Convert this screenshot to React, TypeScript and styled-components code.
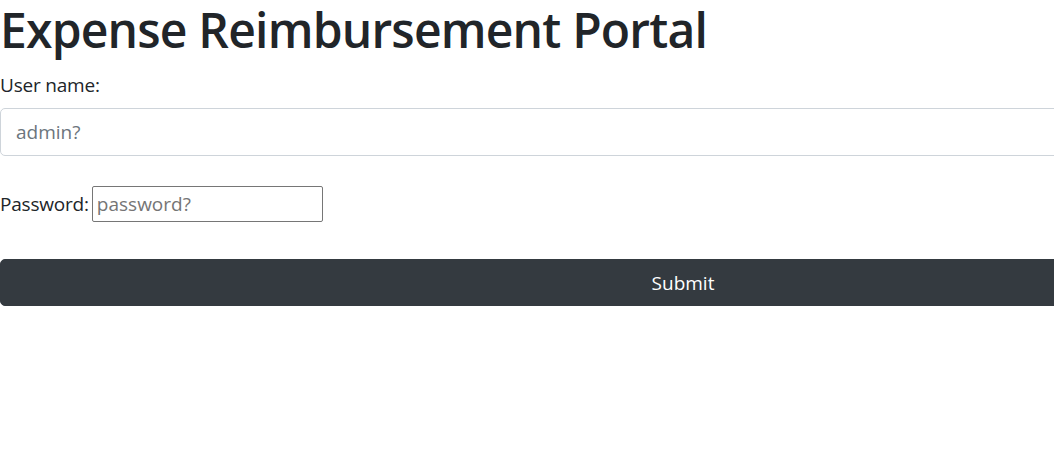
import React from "react";
import styled, { createGlobalStyle } from "styled-components";

const GlobalStyle = createGlobalStyle`
  html, body {
    margin: 0;
    padding: 0;
    overflow: hidden;
    background: #ffffff;
  }
  body {
    font-family: "Open Sans", "Liberation Sans", sans-serif;
    font-size: 20px;
    line-height: 1.5;
    color: #212529;
  }
`;

const Page = styled.div`
  width: 1366px;
`;

const Title = styled.h1`
  margin: 0 0 10px;
  font-size: 48px;
  font-weight: 600;
  line-height: 60px;
  color: #212529;
  letter-spacing: -0.8px;
`;

const Form = styled.form`
  display: flex;
  flex-direction: column;
`;

const Group = styled.div`
  display: flex;
  flex-direction: column;
  margin-bottom: 20px;
`;

const Label = styled.label<{ $inline?: boolean }>`
  display: block;
  margin-bottom: ${(p) => (p.$inline ? "0" : "8px")};
  font-size: 19px;
  line-height: 30px;
  letter-spacing: -0.2px;
`;

const WideInput = styled.input`
  display: block;
  box-sizing: border-box;
  width: 100%;
  height: 48px;
  padding: 7px 15px;
  font-family: inherit;
  font-size: 19px;
  line-height: 30px;
  color: #495057;
  background: #fff;
  border: 1px solid #ced4da;
  border-radius: 5px;
  outline: none;
  &::placeholder {
    color: #6c757d;
  }
`;

const InlineRow = styled.div`
  display: flex;
  align-items: center;
  gap: 3px;
  margin-top: 10px;
  margin-bottom: 37px;
`;

const SmallInput = styled.input`
  box-sizing: border-box;
  width: 231px;
  height: 36px;
  padding: 1px 4px;
  font-family: inherit;
  font-size: 19px;
  line-height: 30px;
  color: #212529;
  border: 1px solid #767676;
  border-radius: 2px;
  outline: none;
  &::placeholder {
    color: #757575;
  }
`;

const SubmitButton = styled.button`
  box-sizing: border-box;
  width: 100%;
  height: 47px;
  font-family: inherit;
  font-size: 19px;
  line-height: 30px;
  color: #ffffff;
  background: #343a40;
  border: 1px solid #343a40;
  border-radius: 5px;
  cursor: pointer;
`;

export default function App() {
  return (
    <>
      <GlobalStyle />
      <Page>
        <Title>Expense Reimbursement Portal</Title>
        <Form onSubmit={(e) => e.preventDefault()}>
          <Group>
            <Label htmlFor="username">User name:</Label>
            <WideInput id="username" type="text" placeholder="admin?" />
          </Group>
          <InlineRow>
            <Label as="span" $inline>
              Password:
            </Label>
            <SmallInput type="password" placeholder="password?" />
          </InlineRow>
          <SubmitButton type="submit">Submit</SubmitButton>
        </Form>
      </Page>
    </>
  );
}
